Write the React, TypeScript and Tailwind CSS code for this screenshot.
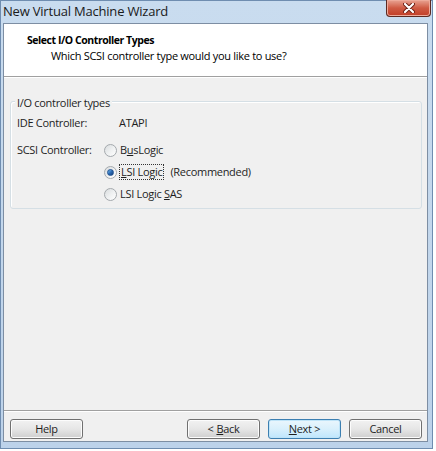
import React from 'react';

const font = { fontFamily: '"Open Sans", "Noto Sans", sans-serif' };

function Radio({ checked }: { checked?: boolean }) {
  return (
    <span className="flex h-[13px] w-[13px] shrink-0 items-center justify-center rounded-full border border-[#a4a9ad] bg-gradient-to-br from-[#d9dcde] via-[#eef0f1] to-[#ffffff]">
      {checked && (
        <span className="h-[7px] w-[7px] rounded-full border border-[#1d4f8f] bg-gradient-to-br from-[#7cc0f0] via-[#2b6cb6] to-[#163f78]" />
      )}
    </span>
  );
}

function Button({
  children,
  primary,
  className = '',
}: {
  children: React.ReactNode;
  primary?: boolean;
  className?: string;
}) {
  return (
    <div
      className={`flex h-[20px] w-[73px] items-center justify-center rounded-[3px] border text-[11px] tracking-[-0.3px] text-[#1e1e1e] ${
        primary
          ? 'border-[#3c7fb1] bg-gradient-to-b from-[#eaf6fd] via-[#d9f0fc] to-[#bee6fd] shadow-[inset_0_0_0_1px_#bfe4f8]'
          : 'border-[#707070] bg-gradient-to-b from-[#f2f2f2] via-[#e6e6e6] to-[#cfcfcf] shadow-[inset_0_0_0_1px_#fcfcfc]'
      } ${className}`}
    >
      {children}
    </div>
  );
}

export default function App() {
  return (
    <div className="h-[451px] w-[436px] bg-white" style={font}>
      <div className="flex h-[449px] w-[433px] flex-col border border-[#6f8db0] bg-gradient-to-b from-[#c9dcef] via-[#c3d7ec] to-[#bcd2ea]">
        {/* Title bar */}
        <div className="flex h-[22px] shrink-0 items-start justify-between">
          <span className="ml-[2px] mt-[1px] text-[13px] leading-[18px] tracking-[-0.2px] text-[#1a1a1a]">
            New Virtual Machine Wizard
          </span>
          <div className="-mt-[1px] mr-[1px] flex h-[17px] w-[45px] items-center justify-center rounded-b-[4px] border border-t-0 border-[#5c2a22] bg-gradient-to-b from-[#e8a393] via-[#cf5a43] to-[#c13d27] shadow-[inset_0_0_0_1px_#eeaa9a]">
            <svg width="12" height="10" viewBox="0 0 12 10">
              <path d="M2 1 L10 9 M10 1 L2 9" stroke="#6b1d12" strokeWidth="4" strokeLinecap="round" />
              <path d="M2 1 L10 9 M10 1 L2 9" stroke="#ffffff" strokeWidth="2.2" strokeLinecap="round" />
            </svg>
          </div>
        </div>

        {/* Client area */}
        <div className="mb-[6px] ml-[2px] mr-[4px] flex flex-1 flex-col border border-[#7d8ea3] bg-[#f0f0f0] text-[11px] tracking-[-0.3px]">
          {/* Header */}
          <div className="h-[53px] shrink-0 border-b border-[#a0a0a0] bg-white">
            <div className="ml-[23px] mt-[8px] text-[10.5px] font-bold leading-[16px] tracking-[-0.45px] text-black">
              Select I/O Controller Types
            </div>
            <div className="ml-[47px] leading-[16px] text-black">
              Which SCSI controller type would you like to use?
            </div>
          </div>

          {/* Body */}
          <div className="flex flex-1 flex-col border-t border-white">
            <div className="relative ml-[6px] mt-[23px] h-[108px] w-[412px] rounded-[3px] border border-[#d5dfe5] shadow-[inset_1px_1px_0_#ffffff]">
              <span className="absolute -top-[7px] left-[4px] bg-[#f0f0f0] px-[2px] leading-[16px] text-[#1e1e1e]">
                I/O controller types
              </span>
              <div className="ml-[6px] mt-[13px] flex leading-[16px] text-[#1e1e1e]">
                <span className="w-[102px]">IDE Controller:</span>
                <span>ATAPI</span>
              </div>
              <div className="ml-[6px] mt-[11px] flex leading-[16px] text-[#1e1e1e]">
                <span className="w-[87px]">SCSI Controller:</span>
                <div className="flex flex-col gap-[6px]">
                  <div className="flex h-[16px] items-center gap-[2px]">
                    <Radio />
                    <span className="px-[1px]">
                      B<span className="underline">u</span>sLogic
                    </span>
                  </div>
                  <div className="flex h-[16px] items-center gap-[2px]">
                    <Radio checked />
                    <span className="border border-dotted border-[#333] px-[1px] leading-[14px]">
                      <span className="underline">L</span>SI Logic
                    </span>
                    <span className="ml-[4px]">(Recommended)</span>
                  </div>
                  <div className="flex h-[16px] items-center gap-[2px]">
                    <Radio />
                    <span className="px-[1px]">
                      LSI Logic <span className="underline">S</span>AS
                    </span>
                  </div>
                </div>
              </div>
            </div>

            <div className="flex-1" />

            {/* Footer */}
            <div className="border-t border-[#a0a0a0]">
              <div className="flex h-[30px] items-start border-t border-white pt-[7px]">
                <Button className="ml-[6px]">Help</Button>
                <div className="flex-1" />
                <Button>
                  &lt; <span className="ml-[3px] underline">B</span>ack
                </Button>
                <Button primary className="ml-[8px]">
                  <span className="underline">N</span>ext &gt;
                </Button>
                <Button className="ml-[8px] mr-[5px]">Cancel</Button>
              </div>
            </div>
          </div>
        </div>
      </div>
    </div>
  );
}
